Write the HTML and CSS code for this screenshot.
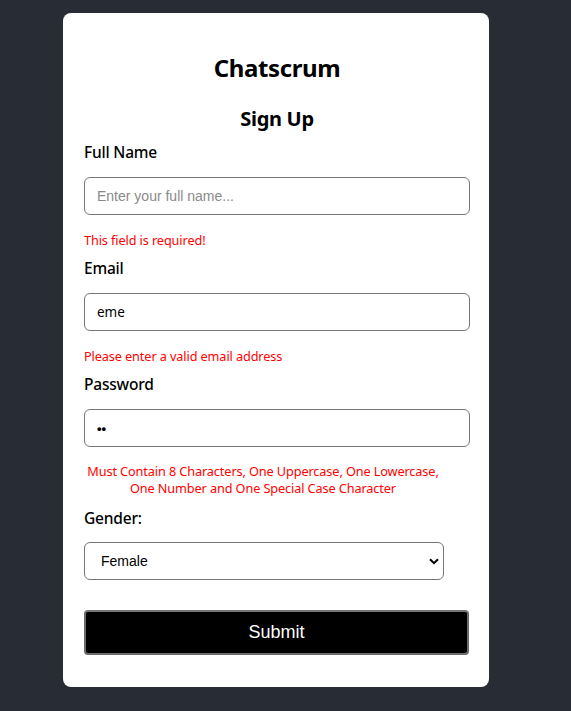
FILE: index.html
```html
<!DOCTYPE html>
<html lang="en">
<head>
<meta charset="utf-8">
<title>Chatscrum - Sign Up</title>
<link rel="stylesheet" href="styles.css">
</head>
<body>
<div class="card">
  <h1 class="brand">Chatscrum</h1>
  <h2 class="title">Sign Up</h2>
  <form class="form">
    <label class="label" for="name">Full Name</label>
    <input class="field" id="name" type="text" placeholder="Enter your full name...">
    <p class="error">This field is required!</p>

    <label class="label" for="email">Email</label>
    <input class="field field-value" id="email" type="text" value="eme">
    <p class="error">Please enter a valid email address</p>

    <label class="label" for="pw">Password</label>
    <input class="field field-pw" id="pw" type="password" value="ab">
    <p class="error error-center"><span class="line">Must Contain 8 Characters, One Uppercase, One Lowercase,</span><span class="line">One Number and One Special Case Character</span></p>

    <label class="label label-gender" for="gender">Gender:</label>
    <div class="select-wrap">
      <select class="select" id="gender">
        <option>Female</option>
        <option>Male</option>
      </select>
      <svg class="chev" width="10" height="7" viewBox="0 0 10 7"><path d="M1 1.2 L5 5.2 L9 1.2" fill="none" stroke="#000" stroke-width="2"/></svg>
    </div>

    <button class="submit" type="button">Submit</button>
  </form>
</div>
</body>
</html>
```

FILE: styles.css
```css
* { box-sizing: border-box; }
html, body {
  margin: 0;
  padding: 0;
}
body {
  background: #282c34;
  min-height: 711px;
  font-family: "Noto Sans", "Open Sans", sans-serif;
  color: #000;
}
.card {
  width: 426px;
  margin: 13px 0 0 63px;
  background: #fff;
  border-radius: 8px;
  padding: 39px 19px 32px 21px;
  display: flex;
  flex-direction: column;
}
.brand {
  margin: 0;
  font-size: 24px;
  line-height: 32px;
  font-weight: 700;
  text-align: center;
  letter-spacing: -0.4px;
}
.title {
  margin: 21px 0 0;
  font-size: 20px;
  line-height: 28px;
  font-weight: 700;
  text-align: center;
  letter-spacing: -0.3px;
}
.form {
  display: flex;
  flex-direction: column;
  margin-top: 8px;
}
.label {
  font-size: 15.5px;
  line-height: 22px;
  font-weight: 500;
  letter-spacing: -0.2px;
  margin: 0 0 14px;
}
.field {
  width: 386px;
  height: 38px;
  border: 1px solid #767676;
  border-radius: 6px;
  padding: 0 12px;
  font-family: "Noto Sans", sans-serif;
  font-size: 13.5px;
  color: #000;
  background: #fff;
  outline: none;
}
.field::placeholder {
  font-family: "Liberation Sans", Arial, sans-serif;
  font-size: 14px;
  color: #8a8a8a;
}
.field-pw {
  font-family: "Liberation Sans", Arial, sans-serif;
  font-size: 13px;
  font-weight: 700;
  letter-spacing: 0;
}
.error {
  margin: 16px 0 8px;
  font-size: 12.7px;
  line-height: 18px;
  color: #ff0000;
  letter-spacing: -0.1px;
}
.error-center {
  width: 358px;
  display: flex;
  flex-direction: column;
  align-items: center;
  line-height: 17px;
  margin: 16px 0 10px;
}
.line {
  white-space: nowrap;
}
.label-gender { margin-bottom: 13px; }
.select-wrap {
  position: relative;
  width: 360px;
  height: 38px;
}
.select {
  width: 360px;
  height: 38px;
  border: 1px solid #767676;
  border-radius: 6px;
  padding: 0 16px;
  font-family: "Liberation Sans", Arial, sans-serif;
  font-size: 14px;
  color: #000;
  background: #fff;
  appearance: none;
  -webkit-appearance: none;
  outline: none;
}
.chev {
  position: absolute;
  right: 5px;
  top: 16px;
  pointer-events: none;
}
.submit {
  margin-top: 30px;
  width: 385px;
  height: 45px;
  background: #000;
  color: #fff;
  border: 2px solid #6b6b6b;
  border-top-color: #767676;
  border-radius: 4px;
  font-family: "Liberation Sans", Arial, sans-serif;
  font-size: 18px;
  cursor: pointer;
}
```
